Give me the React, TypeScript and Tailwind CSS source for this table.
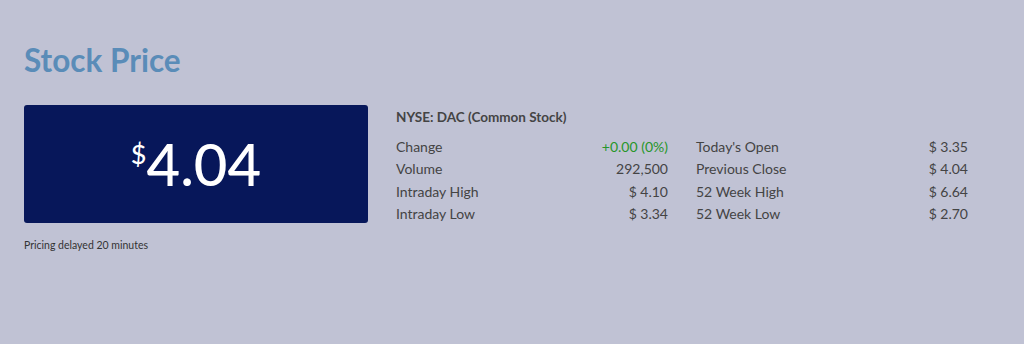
const left = [
  { label: "Change", value: "+0.00 (0%)", green: true },
  { label: "Volume", value: "292,500" },
  { label: "Intraday High", value: "$ 4.10" },
  { label: "Intraday Low", value: "$ 3.34" },
];

const right = [
  { label: "Today's Open", value: "$ 3.35" },
  { label: "Previous Close", value: "$ 4.04" },
  { label: "52 Week High", value: "$ 6.64" },
  { label: "52 Week Low", value: "$ 2.70" },
];

type Row = { label: string; value: string; green?: boolean };

function StatColumn({ rows }: { rows: Row[] }) {
  return (
    <div className="w-[272px]">
      {rows.map((row) => (
        <div key={row.label} className="flex h-[22.5px] items-center justify-between">
          <span>{row.label}</span>
          <span className={row.green ? "text-[#27962a]" : ""}>{row.value}</span>
        </div>
      ))}
    </div>
  );
}

export default function App() {
  return (
    <div className="h-[344px] w-full bg-[#c0c2d4] px-6 pt-[40px] font-['Lato','Open_Sans',sans-serif] text-[#444]">
      <h1 className="text-[31.5px] font-bold leading-[40px] text-[#5a8cb8]">Stock Price</h1>

      <div className="mt-[25px] flex gap-[28px]">
        <div>
          <div className="flex h-[118px] w-[344px] items-center justify-center rounded-[3px] bg-[#07175a] text-white">
            <span className="self-start pt-[35px] text-[27px] font-medium leading-none">$</span>
            <span className="text-[58px] font-medium leading-none">4.04</span>
          </div>
          <p className="mt-[15px] text-[10.5px] text-[#333]">Pricing delayed 20 minutes</p>
        </div>

        <div className="text-[14px]">
          <p className="mt-[3px] text-[13.5px] font-bold leading-[18px]">NYSE: DAC (Common Stock)</p>
          <div className="mt-[9px] flex gap-[28px]">
            <StatColumn rows={left} />
            <StatColumn rows={right} />
          </div>
        </div>
      </div>
    </div>
  );
}
